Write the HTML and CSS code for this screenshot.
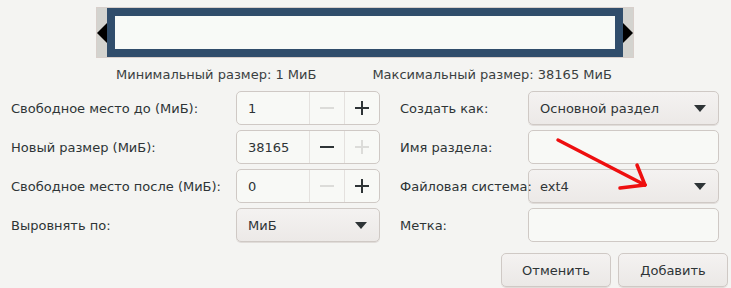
FILE: index.html
```html
<!DOCTYPE html>
<html lang="ru">
<head>
    <meta charset="UTF-8">
    <title>Новый раздел</title>
    <link rel="stylesheet" href="styles.css">
</head>
<body>
    <div class="resizer">
        <div class="handle"><span class="tri tri-left"></span></div>
        <div class="part"><div class="part-inner"></div></div>
        <div class="handle"><span class="tri tri-right"></span></div>
    </div>

    <div class="limits">
        <span class="min">Минимальный размер: 1 МиБ</span>
        <span class="max">Максимальный размер: 38165 МиБ</span>
    </div>

    <div class="form">
        <label class="lbl">Свободное место до (МиБ):</label>
        <div class="spin">
            <span class="spin-value">1</span>
            <span class="spin-btn off"><span class="minus"></span></span>
            <span class="spin-btn"><span class="plus"></span></span>
        </div>
        <label class="lbl lbl-right">Создать как:</label>
        <div class="combo"><span>Основной раздел</span><span class="arrow"></span></div>

        <label class="lbl">Новый размер (МиБ):</label>
        <div class="spin">
            <span class="spin-value">38165</span>
            <span class="spin-btn"><span class="minus"></span></span>
            <span class="spin-btn off"><span class="plus"></span></span>
        </div>
        <label class="lbl lbl-right">Имя раздела:</label>
        <div class="entry"></div>

        <label class="lbl">Свободное место после (МиБ):</label>
        <div class="spin">
            <span class="spin-value">0</span>
            <span class="spin-btn off"><span class="minus"></span></span>
            <span class="spin-btn"><span class="plus"></span></span>
        </div>
        <label class="lbl lbl-right lbl-wide">Файловая система:</label>
        <div class="combo combo-fs"><span>ext4</span><span class="arrow"></span></div>

        <label class="lbl">Выровнять по:</label>
        <div class="combo"><span>МиБ</span><span class="arrow"></span></div>
        <label class="lbl lbl-right">Метка:</label>
        <div class="entry"></div>
    </div>

    <div class="actions">
        <button class="btn">Отменить</button>
        <button class="btn">Добавить</button>
    </div>

    <!-- red annotation arrow drawn over the dialog -->
    <svg class="annot" width="731" height="288" viewBox="0 0 731 288">
        <g stroke="#ee0f0f" stroke-width="3.5" fill="none" stroke-linecap="round">
            <line x1="558" y1="140" x2="645" y2="185"/>
            <line x1="637" y1="165" x2="645" y2="185"/>
            <line x1="620" y1="188" x2="645" y2="185"/>
        </g>
    </svg>
</body>
</html>
```

FILE: styles.css
```css
body {
    margin: 0;
    background: #f4f4f2;
    font-family: "DejaVu Sans", sans-serif;
    font-size: 13px;
    color: #2e3436;
    position: relative;
    width: 731px;
    height: 288px;
    overflow: hidden;
}
.resizer {
    display: flex;
    margin: 7px 0 0 96px;
    width: 538px;
    height: 51px;
    background: #d3d3cf;
    box-sizing: border-box;
    border: 1px solid #d8cfcb;
}
.handle {
    width: 10px;
    display: flex;
    align-items: center;
}
.tri {
    width: 0;
    height: 0;
    border-top: 10px solid transparent;
    border-bottom: 10px solid transparent;
}
.tri-left {
    border-right: 10px solid #000;
}
.tri-right {
    border-left: 10px solid #000;
}
.part {
    flex: 1;
    background: #304d6b;
    padding: 8px;
    display: flex;
}
.part-inner {
    flex: 1;
    background: #f8faf7;
}
.limits {
    display: flex;
    padding-left: 116px;
    gap: 56px;
    height: 33px;
    align-items: center;
    color: #3a3f41;
}
.form {
    display: grid;
    grid-template-columns: 225px 144px 20px 128px 191px;
    grid-auto-rows: 34px;
    row-gap: 5px;
    padding-left: 11px;
}
.lbl {
    display: flex;
    align-items: center;
    white-space: nowrap;
}
.lbl-right {
    grid-column: 4;
}
.lbl-wide {
    position: relative;
    z-index: 1;
    width: 0;
}
.spin, .entry, .combo {
    box-sizing: border-box;
    border: 1px solid #cfc9c5;
    border-radius: 5px;
    display: flex;
}
.spin, .entry {
    background: #f8f9f6;
}
.spin-value {
    width: 73px;
    padding-left: 11px;
    box-sizing: border-box;
    display: flex;
    align-items: center;
    border-right: 1px solid #e4e1de;
}
.spin-btn {
    width: 34px;
    display: flex;
    align-items: center;
    justify-content: center;
}
.spin-btn + .spin-btn {
    border-left: 1px solid #e4e1de;
}
.minus, .plus {
    position: relative;
    width: 14px;
    height: 2px;
    background: #2e3436;
}
.plus::after {
    content: "";
    position: absolute;
    left: 6px;
    top: -6px;
    width: 2px;
    height: 14px;
    background: #2e3436;
}
.off .minus, .off .plus, .off .plus::after {
    background: #dcdcd9;
}
.combo {
    background: linear-gradient(#f4f2f1, #ece9e7);
    box-shadow: 0 1px 0 #e0dcd9;
    align-items: center;
    justify-content: space-between;
    padding: 0 12px 0 11px;
}
.combo-fs {
    padding-left: 11px;
}
.arrow {
    width: 0;
    height: 0;
    border-left: 6px solid transparent;
    border-right: 6px solid transparent;
    border-top: 7px solid #2e3436;
}
.actions {
    display: flex;
    justify-content: flex-end;
    gap: 7px;
    padding: 11px 3px 0 0;
}
.btn {
    width: 110px;
    height: 34px;
    font-family: "DejaVu Sans", sans-serif;
    font-size: 13px;
    color: #2e3436;
    background: linear-gradient(#f4f2f1, #ebe8e6);
    border: 1px solid #cfc9c5;
    border-radius: 5px;
    box-shadow: 0 1px 0 #e0dcd9;
}
.annot {
    position: absolute;
    left: 0;
    top: 0;
    pointer-events: none;
}
```
